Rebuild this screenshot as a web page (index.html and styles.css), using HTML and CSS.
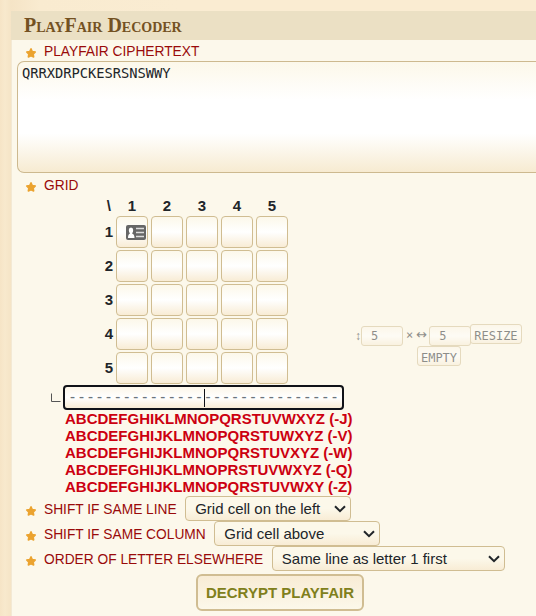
FILE: index.html
```html
<!DOCTYPE html>
<html lang="en">
<head>
<meta charset="utf-8">
<title>PlayFair Decoder</title>
<link rel="stylesheet" href="styles.css">
</head>
<body>
<svg width="0" height="0" class="defs"><symbol id="star" viewBox="0 0 12 12"><path d="M6 1.8 7.3 4.5 10.3 5 8.2 7.100 8.700 10 6 8.700 3.300 10 3.800 7.100 1.700 5 4.700 4.500Z" fill="#eba32f" stroke="#eba32f" stroke-width="1.500" stroke-linejoin="round"/></symbol><symbol id="chevron" viewBox="0 0 12 8"><path d="M1 1.2 6 6.2 11 1.2" fill="none" stroke="#212529" stroke-width="2"/></symbol></svg>
<main class="panel">
  <h2 class="title">PlayFair Decoder</h2>
  <div class="row row-text"><svg class="star"><use href="#star"/></svg><label>PLAYFAIR CIPHERTEXT</label></div>
  <textarea class="cipher" spellcheck="false">QRRXDRPCKESRSNSWWY</textarea>
  <div class="row row-grid"><svg class="star"><use href="#star"/></svg><label>GRID</label></div>
  <div class="grid-area">
    <div class="matrix">
      <b class="head corner">\</b><b class="head">1</b><b class="head">2</b><b class="head">3</b><b class="head">4</b><b class="head">5</b>
      <b class="side">1</b><span class="cell"><svg class="card" viewBox="0 0 20 15"><rect width="20" height="15" rx="2" fill="#666"/><path d="M2 13Q2 9 4 8.5Q2.8 7 2.8 5Q2.8 2.5 5 2.5T7.200 5Q7.200 7 6 8.500Q8.500 9 8.500 13Z" fill="#fff"/><path d="M10 3.500h8M10 7.500h8M10 11.500h8" stroke="#ddd" stroke-width="1.500"/></svg></span><span class="cell"></span><span class="cell"></span><span class="cell"></span><span class="cell"></span>
      <b class="side">2</b><span class="cell"></span><span class="cell"></span><span class="cell"></span><span class="cell"></span><span class="cell"></span>
      <b class="side">3</b><span class="cell"></span><span class="cell"></span><span class="cell"></span><span class="cell"></span><span class="cell"></span>
      <b class="side">4</b><span class="cell"></span><span class="cell"></span><span class="cell"></span><span class="cell"></span><span class="cell"></span>
      <b class="side">5</b><span class="cell"></span><span class="cell"></span><span class="cell"></span><span class="cell"></span><span class="cell"></span>
    </div>
    <div class="tools">
      <div class="size"><span class="arrow">↕</span><span class="num">5</span><span class="times">×</span><span class="arrow">↔</span><span class="num">5</span><span class="small resize">RESIZE</span></div>
      <span class="small">EMPTY</span>
    </div>
  </div>
  <div class="key"><svg class="angle" viewBox="0 0 10 10"><path d="M.5 .5v8h9" fill="none" stroke="#555"/></svg><div class="keybox"><span>---------------</span><i class="caret"></i><span>---------------</span></div></div>
  <div class="alphabets">
    <div>ABCDEFGHIKLMNOPQRSTUVWXYZ (-J)</div>
    <div>ABCDEFGHIJKLMNOPQRSTUWXYZ (-V)</div>
    <div>ABCDEFGHIJKLMNOPQRSTUVXYZ (-W)</div>
    <div>ABCDEFGHIJKLMNOPRSTUVWXYZ (-Q)</div>
    <div>ABCDEFGHIJKLMNOPQRSTUVWXY (-Z)</div>
  </div>
  <div class="row option"><svg class="star"><use href="#star"/></svg><label>SHIFT IF SAME LINE</label><div class="pick"><select class="choice"><option>Grid cell on the left</option></select><svg class="chevron"><use href="#chevron"/></svg></div></div>
  <div class="row option"><svg class="star"><use href="#star"/></svg><label>SHIFT IF SAME COLUMN</label><div class="pick"><select class="choice"><option>Grid cell above</option></select><svg class="chevron"><use href="#chevron"/></svg></div></div>
  <div class="row option"><svg class="star"><use href="#star"/></svg><label>ORDER OF LETTER ELSEWHERE</label><div class="pick wide"><select class="choice"><option>Same line as letter 1 first</option></select><svg class="chevron"><use href="#chevron"/></svg></div></div>
  <button class="decrypt">DECRYPT PLAYFAIR</button>
</main>
</body>
</html>
```
FILE: styles.css
```css
* { box-sizing: border-box; }
body {
  margin: 0;
  height: 616px;
  padding: 11px 0 0 11px;
  background: linear-gradient(90deg, #f6e4c6 0, #f8e9cd 5px, #f5e4c6 11px, #f9ebd0 40px, #faecd2 180px);
  font: 15px/17px "Liberation Sans", sans-serif;
  color: #212529;
}
.defs { position: absolute; }
.panel { height: 605px; background: #fcf8eb; border-left: 1px solid #f3e9d4; }
.title {
  margin: 0 0 0 -1px;
  height: 29px;
  padding-left: 13px;
  background: #ebe0c4;
  color: #735122;
  font: small-caps bold 20px/29px "Liberation Serif", serif;
}
.row { display: flex; align-items: center; padding-left: 13px; color: #990a0a; font-size: 13.75px; }
.row label { white-space: pre; }
.star { width: 12px; height: 12px; margin: 5px 7px 0 0; flex: none; }
.row-text { height: 21px; }
.row-text label, .option label { padding-top: 2px; }
.cipher {
  display: block;
  width: 519px;
  height: 112px;
  margin: 0 0 0 5px;
  padding: 3px 3px 3px 4px;
  resize: none;
  outline: none;
  border: 1px solid #cdb98f;
  border-right: 0;
  border-radius: 7px 0 0 7px;
  background: linear-gradient(#fcf8ea, #fff 35%, #fff 65%, #f7ebd1);
  font: 13.75px/17px "DejaVu Sans Mono", monospace;
  letter-spacing: -.03px;
  color: #212529;
}
.row-grid { height: 24px; }
.row-grid .star { margin-top: 4px; }
.grid-area { display: flex; height: 188px; }
.matrix {
  display: grid;
  grid-template-columns: 12px repeat(5, 32px);
  grid-template-rows: 17px repeat(5, 32px);
  column-gap: 3px;
  row-gap: 2px;
  margin-left: 89px;
}
.head { text-align: center; line-height: 18px; }
.side { line-height: 32px; text-align: right; }
.corner { text-align: right; padding-right: 2px; }
.cell {
  display: flex;
  align-items: center;
  border: 1px solid #d0bd92;
  border-radius: 4px;
  background: linear-gradient(#fcf8ea, #fff 50%, #f8ecd5);
}
.card { width: 20px; height: 15px; margin-left: 9px; flex: none; }
.tools {
  width: 168px;
  margin: 127px 0 0 67px;
  opacity: .5;
  display: flex;
  flex-direction: column;
  align-items: center;
  font: 12px/20px "DejaVu Sans Mono", monospace;
}
.size { display: flex; align-items: center; height: 22px; align-self: stretch; }
.arrow { width: 6px; font: 12px/20px "Liberation Sans", sans-serif; margin-top: 2px; }
.num, .small { height: 20px; border: 1px solid #d0bd92; border-radius: 3px; background: linear-gradient(#fcf6e9, #fff 50%, #f8ecd5); }
.num { width: 42px; padding-left: 9px; margin-top: 2px; line-height: 19px; flex: none; }
.times { margin: 0 3px 0 3px; }
.times + .arrow { width: 13px; margin-top: 0; font: 13px/20px "DejaVu Sans", sans-serif; }
.small { padding: 0 3px; line-height: 22px; }
.resize { align-self: flex-start; margin-left: -1px; }
.key { display: flex; height: 25px; align-items: center; margin-left: 39px; }
.angle { width: 10px; height: 10px; margin-right: 2px; }
.keybox {
  display: flex;
  align-items: center;
  width: 281px;
  height: 25px;
  padding-left: 3px;
  border: 2px solid #101218;
  border-radius: 4px;
  background: linear-gradient(#fcf6e9, #fff 50%, #f8ecd5);
  color: #6c757d;
  font: 15px/18px "DejaVu Sans Mono", monospace;
}
.keybox span { margin-top: -2px; }
.caret { width: 1px; height: 18px; margin: 0 -1.5px 0 .5px; background: #101218; }
.alphabets { margin-left: 53px; height: 86px; font-weight: bold; color: #cc0010; }
.option { height: 25px; }
.pick { position: relative; width: 166px; height: 25px; margin-left: 8.5px; }
.choice {
  appearance: none;
  display: block;
  width: 100%;
  height: 25px;
  margin: 0;
  padding: 0 9px;
  border: 1px solid #d0bd92;
  border-radius: 4px;
  background: linear-gradient(#fcf8ea, #fcf8ea 50%, #f8ecd5);
  font: 15px "Liberation Sans", sans-serif;
  color: #212529;
}
.chevron { position: absolute; right: 5px; top: 9px; width: 12px; height: 8px; pointer-events: none; }
.wide { width: 233px; }
.decrypt {
  display: block;
  width: 168px;
  height: 37px;
  margin: 3px 0 0 184px;
  padding: 0;
  border: 2px solid #d0bd92;
  border-radius: 6px;
  background: linear-gradient(#f8ecd5, #fcf8ea);
  font: bold 15px "Liberation Sans", sans-serif;
  color: #80801c;
}
```
